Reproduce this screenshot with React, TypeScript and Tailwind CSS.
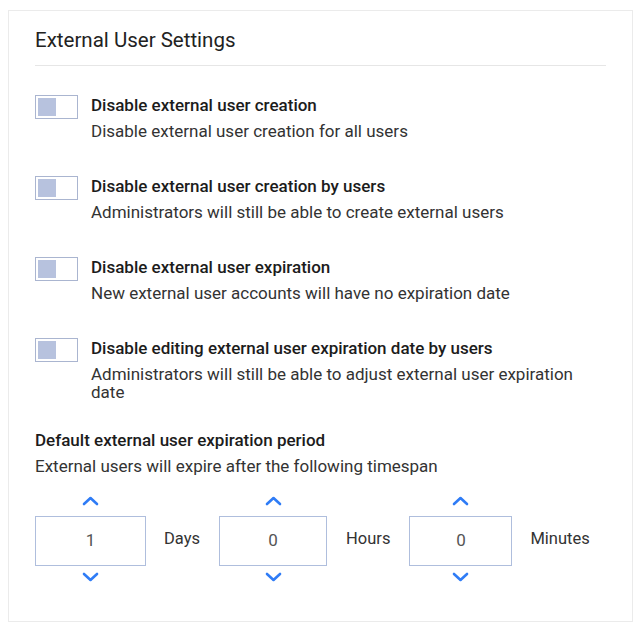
import React from "react";

const toggles = [
  {
    title: "Disable external user creation",
    desc: "Disable external user creation for all users",
  },
  {
    title: "Disable external user creation by users",
    desc: "Administrators will still be able to create external users",
  },
  {
    title: "Disable external user expiration",
    desc: "New external user accounts will have no expiration date",
  },
  {
    title: "Disable editing external user expiration date by users",
    desc: "Administrators will still be able to adjust external user expiration date",
  },
];

const Chevron = ({ up }: { up?: boolean }) => (
  <svg width="17" height="10" viewBox="0 0 17 10" fill="none">
    <polyline
      points={up ? "2,8 8.5,2 15,8" : "2,2 8.5,8 15,2"}
      stroke="#2f7cf6"
      strokeWidth="2.6"
      strokeLinecap="round"
      strokeLinejoin="round"
    />
  </svg>
);

const Spinner = ({ value, width }: { value: string; width: string }) => (
  <div className={`flex flex-col items-center ${width}`}>
    <button className="h-[16px] flex items-center justify-center">
      <Chevron up />
    </button>
    <div className="mt-[7px] h-[50px] w-full border border-[#afbedd] flex items-center justify-center text-[17px] text-[#555]">
      {value}
    </div>
    <button className="mt-[3px] h-[16px] flex items-center justify-center">
      <Chevron />
    </button>
  </div>
);

const App = () => {
  return (
    <div className="min-h-screen bg-white pt-[10px] pl-[8px]" style={{ fontFamily: "Roboto, 'Liberation Sans', sans-serif" }}>
      <div className="w-[625px] border border-[#ebebeb] px-[26px] pt-[17px] pb-[36px]">
        <h2 className="text-[20.5px] leading-[24px] text-[#222] pb-[13px] border-b border-[#e6e6e6]">
          External User Settings
        </h2>

        <div className="mt-[29px] flex flex-col gap-[36px]">
          {toggles.map((t) => (
            <div key={t.title} className="flex items-start gap-[13px]">
              <div className="w-[43px] h-[24px] shrink-0 border-[1.5px] border-[#aab5d0] p-[2px]">
                <div className="w-[18px] h-[18px] bg-[#b7c2de]" />
              </div>
              <div className="flex-1">
                <div className="text-[17px] leading-[20px] font-medium text-[#1c1c1c]">{t.title}</div>
                <div className="mt-[7px] text-[17px] leading-[18px] text-[#333]">{t.desc}</div>
              </div>
            </div>
          ))}
        </div>

        <div className="mt-[29px] text-[17px] leading-[20px] font-medium text-[#1c1c1c]">
          Default external user expiration period
        </div>
        <div className="mt-[7px] text-[17px] leading-[18px] text-[#333]">
          External users will expire after the following timespan
        </div>

        <div className="mt-[18px] flex items-center">
          <Spinner value="1" width="w-[111px]" />
          <span className="ml-[18px] text-[16.5px] text-[#333]">Days</span>
          <div className="ml-[19px]">
            <Spinner value="0" width="w-[108px]" />
          </div>
          <span className="ml-[19px] text-[16.5px] text-[#333]">Hours</span>
          <div className="ml-[19px]">
            <Spinner value="0" width="w-[103px]" />
          </div>
          <span className="ml-[18px] text-[16.5px] text-[#333]">Minutes</span>
        </div>
      </div>
    </div>
  );
};

export default App;
